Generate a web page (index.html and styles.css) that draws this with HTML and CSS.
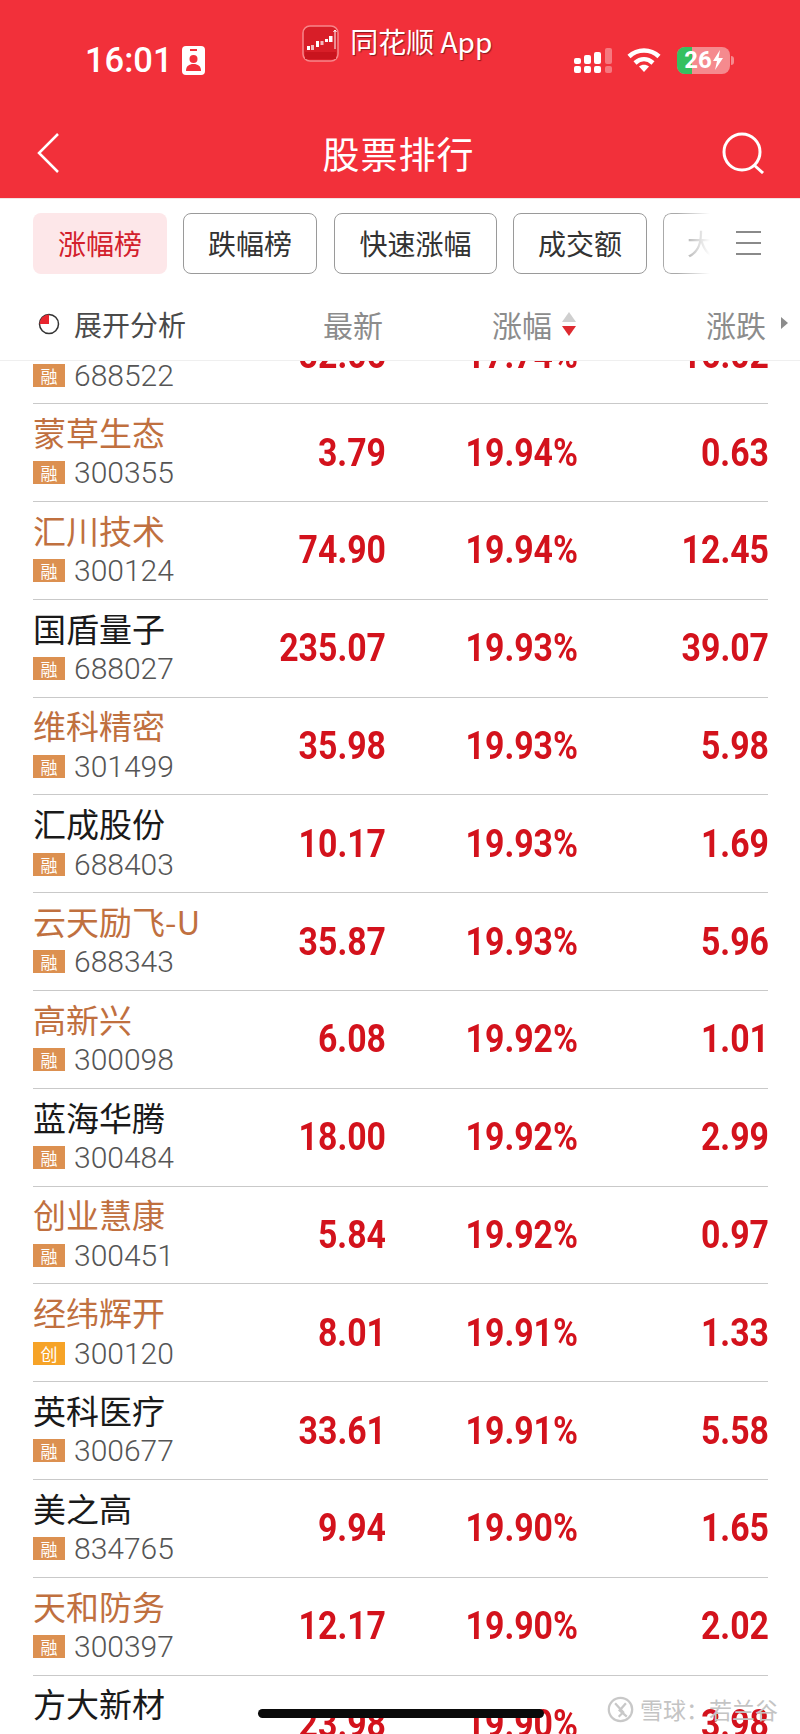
FILE: index.html
```html
<!DOCTYPE html>
<html lang="zh-CN">
<head>
    <meta charset="UTF-8">
    <title>股票排行</title>
    <link rel="stylesheet" href="styles.css">
</head>
<body>
<div class="screen">
    <div class="top">
        <div class="status">
            <div class="time">16:01
                <svg class="idcard" viewBox="0 0 23 29"><rect width="23" height="29" rx="4" fill="#fff"/><rect x="8" y="3" width="7" height="2" fill="#f2303a"/><circle cx="11.500" cy="13" r="4" fill="#f2303a"/><path d="M4 25c0-5 3-7 7.500-7s7.500 2 7.500 7z" fill="#f2303a"/></svg>
            </div>
            <div class="app">
                <svg class="applogo" viewBox="0 0 37 37"><rect x="1" y="1" width="35" height="35" rx="7" fill="#d81e28" stroke="#f7868a" stroke-width="1.500"/><path d="M3 27h31v7H3z" fill="#c9141e"/><g fill="#fff"><rect x="5" y="21" width="3" height="4"/><rect x="9" y="20" width="3" height="5" opacity=".7"/><rect x="14" y="16" width="3" height="6"/><rect x="18.500" y="16" width="3" height="4" opacity=".7"/><rect x="23" y="14" width="3" height="3"/><rect x="27" y="11" width="3.500" height="6"/></g><path d="M33 24V5M31.500 7L33 5l1.500 2" stroke="#fff" stroke-width="1" fill="none"/></svg>
                同花顺 App
            </div>
            <div class="indicators">
                <svg class="signal" viewBox="0 0 39 25" fill="#fff"><rect x="0" y="10" width="7" height="6" rx="2"/><rect x="0" y="18" width="7" height="7" rx="2"/><rect x="10" y="7" width="7" height="9" rx="2"/><rect x="10" y="18" width="7" height="7" rx="2"/><rect x="20" y="4" width="7" height="12" rx="2"/><rect x="20" y="18" width="7" height="7" rx="2"/><g opacity=".35"><rect x="31" y="0" width="7" height="16" rx="2"/><rect x="31" y="18" width="7" height="7" rx="2"/></g></svg>
                <svg class="wifi" viewBox="0 0 34 26" fill="none" stroke="#fff" stroke-width="4.500"><path d="M2 9.500C10.500 1.500 23.500 1.500 32 9.500"/><path d="M8 16c5.500-5 12.500-5 18 0"/><path d="M17 25l-5-5.500c3-2.500 7-2.500 10 0z" fill="#fff" stroke="none"/></svg>
                <div class="battery"><span class="charge"></span><span class="level">26<svg class="bolt" viewBox="0 0 10 20"><path d="M7 0L0 11h4l-2 9 8-12H5.500z" fill="#fff"/></svg></span></div>
            </div>
        </div>
        <div class="nav">
            <svg class="back" viewBox="0 0 22 40" fill="none" stroke="#fff" stroke-width="2.500"><path d="M21 1L2 20l19 19"/></svg>
            <div class="title">股票排行</div>
            <svg class="search" viewBox="0 0 44 42" fill="none" stroke="#fff" stroke-width="3"><circle cx="21" cy="20" r="18"/><path d="M33 33l9 8"/></svg>
        </div>
    </div>

    <div class="tabs">
        <div class="tab on">涨幅榜</div>
        <div class="tab">跌幅榜</div>
        <div class="tab wide">快速涨幅</div>
        <div class="tab">成交额</div>
        <div class="tab cut">大</div>
        <div class="menu"><i></i><i></i><i></i></div>
    </div>

    <div class="head">
        <div class="expand">
            <svg class="pie" viewBox="0 0 22 22"><circle cx="11" cy="11" r="9.500" fill="none" stroke="#333" stroke-width="1.500"/><path d="M11 1.500A9.500 9.500 0 0 0 1.500 11H11z" fill="#e8252e"/></svg>
            展开分析
        </div>
        <div class="hcol">最新</div>
        <div class="hcol">涨幅
            <svg class="sort" viewBox="0 0 16 26"><path d="M8 1l7 10H1z" fill="#cfcfcf"/><path d="M1 15h14L8 25z" fill="#de2a30"/></svg>
        </div>
        <div class="hcol last">涨跌<span class="more"></span></div>
    </div>

    <div class="list">
        <div class="row first"><div class="name"><div class="cn">&nbsp;</div><div class="sub"><span class="tag">融</span>688522</div></div><div class="num">82.06</div><div class="num">17.74%</div><div class="num">16.02</div></div>
        <div class="row"><div class="name"><div class="cn seen">蒙草生态</div><div class="sub"><span class="tag">融</span>300355</div></div><div class="num">3.79</div><div class="num">19.94%</div><div class="num">0.63</div></div>
        <div class="row"><div class="name"><div class="cn seen">汇川技术</div><div class="sub"><span class="tag">融</span>300124</div></div><div class="num">74.90</div><div class="num">19.94%</div><div class="num">12.45</div></div>
        <div class="row"><div class="name"><div class="cn">国盾量子</div><div class="sub"><span class="tag">融</span>688027</div></div><div class="num">235.07</div><div class="num">19.93%</div><div class="num">39.07</div></div>
        <div class="row"><div class="name"><div class="cn seen">维科精密</div><div class="sub"><span class="tag">融</span>301499</div></div><div class="num">35.98</div><div class="num">19.93%</div><div class="num">5.98</div></div>
        <div class="row"><div class="name"><div class="cn">汇成股份</div><div class="sub"><span class="tag">融</span>688403</div></div><div class="num">10.17</div><div class="num">19.93%</div><div class="num">1.69</div></div>
        <div class="row"><div class="name"><div class="cn seen">云天励飞-U</div><div class="sub"><span class="tag">融</span>688343</div></div><div class="num">35.87</div><div class="num">19.93%</div><div class="num">5.96</div></div>
        <div class="row"><div class="name"><div class="cn seen">高新兴</div><div class="sub"><span class="tag">融</span>300098</div></div><div class="num">6.08</div><div class="num">19.92%</div><div class="num">1.01</div></div>
        <div class="row"><div class="name"><div class="cn">蓝海华腾</div><div class="sub"><span class="tag">融</span>300484</div></div><div class="num">18.00</div><div class="num">19.92%</div><div class="num">2.99</div></div>
        <div class="row"><div class="name"><div class="cn seen">创业慧康</div><div class="sub"><span class="tag">融</span>300451</div></div><div class="num">5.84</div><div class="num">19.92%</div><div class="num">0.97</div></div>
        <div class="row"><div class="name"><div class="cn seen">经纬辉开</div><div class="sub"><span class="tag chuang">创</span>300120</div></div><div class="num">8.01</div><div class="num">19.91%</div><div class="num">1.33</div></div>
        <div class="row"><div class="name"><div class="cn">英科医疗</div><div class="sub"><span class="tag">融</span>300677</div></div><div class="num">33.61</div><div class="num">19.91%</div><div class="num">5.58</div></div>
        <div class="row"><div class="name"><div class="cn">美之高</div><div class="sub"><span class="tag">融</span>834765</div></div><div class="num">9.94</div><div class="num">19.90%</div><div class="num">1.65</div></div>
        <div class="row"><div class="name"><div class="cn seen">天和防务</div><div class="sub"><span class="tag">融</span>300397</div></div><div class="num">12.17</div><div class="num">19.90%</div><div class="num">2.02</div></div>
        <div class="row"><div class="name"><div class="cn">方大新材</div><div class="sub"></div></div><div class="num">23.98</div><div class="num">19.90%</div><div class="num">3.98</div></div>
    </div>

    <div class="homebar"></div>
    <div class="mark">
        <svg class="marklogo" viewBox="0 0 30 30" fill="none" stroke="#c8c8c8" stroke-width="2.500"><circle cx="15" cy="15" r="13"/><path d="M9 8l9 10-5 5M21 8l-7 8 8 7"/></svg>
        雪球：若兰谷
    </div>
</div>
</body>
</html>
```

FILE: styles.css
```css
* { box-sizing: border-box; }

html, body { margin: 0; padding: 0; background: #fff; }

.screen {
    position: relative;
    width: 800px;
    height: 1734px;
    overflow: hidden;
    font-family: "Noto Sans CJK SC", "Liberation Sans", sans-serif;
    background: #fff;
}

/* red header */
.top { height: 198px; background: #f2303a; color: #fff; }

.status {
    display: flex;
    justify-content: space-between;
    height: 122px;
    padding: 25px 70px 0 85px;
}

.time {
    display: flex;
    align-items: center;
    gap: 9px;
    height: 70px;
    font: 500 34.500px Roboto, sans-serif;
}

.idcard { width: 23px; height: 29px; }

.app {
    display: flex;
    align-items: flex-start;
    gap: 11px;
    height: 37px;
    margin-left: 16px;
    font-size: 28px;
    line-height: 32px;
    text-shadow: 1px 1px 1px #8a1a20;
}

.applogo { width: 37px; height: 37px; }

.indicators { display: flex; align-items: center; gap: 14px; height: 70px; }

.signal { width: 39px; height: 25px; }

.wifi { width: 34px; height: 26px; margin-right: 2px; }

.battery {
    position: relative;
    width: 53px;
    height: 27px;
    border-radius: 8px;
    background: #f58a8e;
}

.battery::after {
    content: "";
    position: absolute;
    right: -4px;
    top: 9px;
    width: 3px;
    height: 9px;
    border-radius: 0 3px 3px 0;
    background: #f58a8e;
}

.charge {
    position: absolute;
    left: 0;
    top: 0;
    width: 15px;
    height: 27px;
    border-radius: 8px 0 0 8px;
    background: #35c060;
}

.level {
    position: relative;
    display: flex;
    align-items: center;
    justify-content: center;
    height: 27px;
    font: 700 24px Roboto, sans-serif;
}

.bolt { width: 10px; height: 20px; margin-left: 1px; }

.nav {
    display: flex;
    align-items: center;
    height: 62px;
    padding: 0 35px 0 37px;
}

.back { width: 22px; height: 40px; }

.title { flex: 1; padding-left: 17px; text-align: center; font-size: 37px; letter-spacing: 1px; }

.search { width: 44px; height: 42px; }

/* tabs */
.tabs {
    display: flex;
    align-items: center;
    gap: 16px;
    height: 89px;
    padding-left: 33px;
    border-top: 1px solid #f3e4e4;
}

.tab {
    display: flex;
    align-items: center;
    justify-content: center;
    flex: none;
    width: 134px;
    height: 61px;
    border: 1px solid #9a9a9a;
    border-radius: 8px;
    font-size: 28px;
    color: #333;
}

.tab.on { border: none; background: #fde7e9; color: #d3202c; }

.tab.wide { width: 163px; margin-left: 1px; }

.tab.cut {
    width: 47px;
    justify-content: flex-start;
    padding-left: 23px;
    border-right: none;
    border-radius: 8px 0 0 8px;
    border-color: #aaa;
    color: #999;
    overflow: hidden;
    white-space: nowrap;
    -webkit-mask-image: linear-gradient(to right, #000 30%, transparent);
    mask-image: linear-gradient(to right, #000 30%, transparent);
}

.menu { display: flex; flex-direction: column; gap: 9px; width: 25px; margin-left: 10px; }

.menu i { display: block; height: 2px; background: #8a8a8a; }

/* column heads */
.head {
    display: grid;
    grid-template-columns: 220px 130px 194px 189px;
    align-items: center;
    height: 74px;
    padding-left: 33px;
    border-bottom: 1px solid #efefef;
}

.expand { display: flex; align-items: center; gap: 14px; padding-left: 5px; font-size: 28px; color: #4a4a4a; }

.pie { width: 22px; height: 22px; }

.hcol { display: flex; align-items: center; justify-content: flex-end; gap: 9px; font-size: 30px; color: #8c8c8c; }

.hcol.last { position: relative; gap: 0; }

.sort { width: 16px; height: 26px; }

.more {
    position: absolute;
    right: -22px;
    top: 15px;
    border-left: 7px solid #8c8c8c;
    border-top: 6px solid transparent;
    border-bottom: 6px solid transparent;
}

/* stock rows */
.list { height: 1373px; overflow: hidden; }

.row {
    display: grid;
    grid-template-columns: 221px 132px 192px 191px;
    align-items: center;
    height: 97.800px;
    margin: 0 32px 0 33px;
    border-bottom: 1px solid #c9c9c9;
}

.row.first { margin-top: -54.500px; }

.name { display: flex; flex-direction: column; gap: 2.500px; padding-bottom: 6px; }

.cn { height: 44px; font-size: 33px; line-height: 44px; color: #1a1a1a; white-space: nowrap; }

.cn.seen { color: #c0703f; }

.sub { display: flex; align-items: center; gap: 9px; height: 33px; font: 300 30px Roboto, sans-serif; color: #555; }

.tag {
    display: flex;
    align-items: center;
    justify-content: center;
    width: 32px;
    height: 23px;
    background: #dc9050;
    color: #fff;
    font: 400 17px "Noto Sans CJK SC", sans-serif;
}

.tag.chuang { background: #f6a327; }

.num {
    text-align: right;
    font: 700 38px Roboto, sans-serif;
    color: #d3121c;
    transform: scaleX(.89);
    transform-origin: right center;
}

/* things on top of the list */
.homebar {
    position: absolute;
    left: 258px;
    top: 1709px;
    width: 286px;
    height: 9px;
    border-radius: 5px;
    background: #0a0a0a;
}

.mark {
    position: absolute;
    left: 607px;
    top: 1692px;
    display: flex;
    align-items: center;
    gap: 6px;
    font-size: 23px;
    color: #c4c4c4;
}

.marklogo { width: 27px; height: 27px; }
```
